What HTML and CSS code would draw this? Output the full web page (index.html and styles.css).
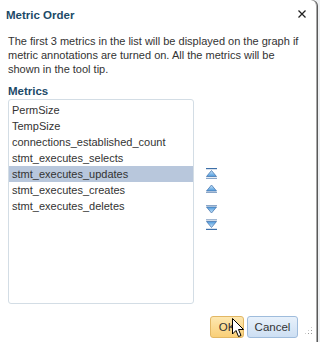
FILE: index.html
```html
<!DOCTYPE html>
<html lang="en">
<head>
    <title>Metric Order</title>
    <link rel="stylesheet" href="styles.css">
</head>
<body>
    <div class="dialog">
        <div class="header">
            <h2>Metric Order</h2>
            <svg class="close" width="8" height="8" viewBox="0 0 8 8">
                <path d="M0.5 0.5 L7.5 7.5 M7.5 0.5 L0.5 7.5" stroke="#222" stroke-width="1.3"/>
            </svg>
        </div>

        <p class="intro">The first 3 metrics in the list will be displayed on the graph if metric annotations are turned on. All the metrics will be shown in the tool tip.</p>

        <div class="section-title">Metrics</div>
        <div class="picker">
            <ul class="list">
                <li>PermSize</li>
                <li>TempSize</li>
                <li>connections_established_count</li>
                <li>stmt_executes_selects</li>
                <li class="selected">stmt_executes_updates</li>
                <li>stmt_executes_creates</li>
                <li>stmt_executes_deletes</li>
            </ul>
            <div class="moves">
                <svg class="move" width="13" height="11" viewBox="0 0 13 11">
                    <defs>
                        <linearGradient id="gUp" x1="0" y1="0" x2="0" y2="1">
                            <stop offset="0" stop-color="#cfe8fb"/>
                            <stop offset="1" stop-color="#4a98dc"/>
                        </linearGradient>
                        <linearGradient id="gDn" x1="0" y1="0" x2="0" y2="1">
                            <stop offset="0" stop-color="#4a98dc"/>
                            <stop offset="1" stop-color="#cfe8fb"/>
                        </linearGradient>
                    </defs>
                    <rect x="1" y="0" width="11" height="1.2" fill="#3d6fa8"/>
                    <path d="M1.5 8.5 L6.5 2.5 L11.5 8.5 Z" fill="url(#gUp)" stroke="#4a79b0" stroke-width="0.8"/>
                    <rect x="1" y="9.8" width="11" height="1.2" fill="#8aa6c8"/>
                </svg>
                <svg class="move" width="13" height="11" viewBox="0 0 13 11">
                    <path d="M1.5 8 L6.5 2 L11.5 8 Z" fill="url(#gUp)" stroke="#4a79b0" stroke-width="0.8"/>
                    <rect x="1" y="8.8" width="11" height="1.2" fill="#8aa6c8"/>
                </svg>
                <svg class="move gap" width="13" height="11" viewBox="0 0 13 11">
                    <rect x="1" y="1" width="11" height="1.2" fill="#8aa6c8"/>
                    <path d="M1.5 3 L6.5 9 L11.5 3 Z" fill="url(#gDn)" stroke="#4a79b0" stroke-width="0.8"/>
                </svg>
                <svg class="move" width="13" height="11" viewBox="0 0 13 11">
                    <rect x="1" y="0.2" width="11" height="1.2" fill="#8aa6c8"/>
                    <path d="M1.5 2.5 L6.5 8.5 L11.5 2.5 Z" fill="url(#gDn)" stroke="#4a79b0" stroke-width="0.8"/>
                    <rect x="1" y="9.8" width="11" height="1.2" fill="#3d6fa8"/>
                </svg>
            </div>
        </div>

        <div class="footer">
            <button class="btn ok">OK</button>
            <button class="btn cancel">Cancel</button>
        </div>

        <span class="grip"></span>

        <svg class="cursor" width="13" height="20" viewBox="0 0 13 20">
            <path d="M0.5 0.5 L0.5 16 L4 12.5 L6.5 18.5 L9 17.5 L6.5 11.5 L11.5 11.5 Z" fill="#fff" stroke="#000" stroke-width="1"/>
        </svg>
    </div>
</body>
</html>
```

FILE: styles.css
```css
body {
    margin: 0;
    background-color: #eef0f2;
    font-family: "Liberation Sans", Arial, sans-serif;
}

.dialog {
    position: relative;
    width: 317px;
    height: 342px;
    box-sizing: border-box;
    background-color: #fff;
    border-right: 1px solid #a8a8a8;
    box-shadow: 1px 0 0 #5a5a5a;
    border-radius: 0 6px 0 0;
    padding: 0 8px;
}

.header {
    display: flex;
    justify-content: space-between;
    align-items: center;
    height: 30px;
}

h2 {
    margin: 0 0 0 -2px;
    font-size: 11.5px;
    font-weight: bold;
    color: #1c4a68;
}

.close {
    display: block;
    margin: -3px 2px 0 0;
}

.intro {
    margin: 4px 0 0;
    font-size: 11px;
    line-height: 14px;
    color: #333;
}

.section-title {
    margin-top: 9px;
    font-size: 11.5px;
    font-weight: bold;
    color: #1c4a68;
}

.picker {
    display: flex;
    align-items: flex-start;
    margin-top: 2px;
}

.list {
    list-style: none;
    margin: 0;
    padding: 2px 0;
    width: 186px;
    height: 205px;
    box-sizing: border-box;
    border: 1px solid #d3dde5;
    border-radius: 3px;
}

.list li {
    height: 16px;
    line-height: 16px;
    padding-left: 3px;
    font-size: 11px;
    color: #333;
    white-space: nowrap;
}

.list li.selected {
    background-color: #b8c7dc;
}

.moves {
    display: flex;
    flex-direction: column;
    gap: 4px;
    margin: 69px 0 0 11px;
}

.move {
    display: block;
}

.move.gap {
    margin-top: 6px;
}

.footer {
    display: flex;
    justify-content: flex-end;
    gap: 3px;
    margin-top: 12px;
    padding-right: 10px;
}

.btn {
    height: 22px;
    box-sizing: border-box;
    font-family: "Liberation Sans", Arial, sans-serif;
    font-size: 11.5px;
    color: #333;
    border-radius: 3px;
    padding: 0;
}

.ok {
    width: 34px;
    background: linear-gradient(#fde7b0, #f9cf78);
    border: 1px solid #e2b764;
}

.cancel {
    width: 51px;
    background: linear-gradient(#e8f1fb, #cddff3);
    border: 1px solid #9fbcdc;
}

.grip {
    position: absolute;
    right: 3px;
    bottom: 7px;
    width: 9px;
    height: 9px;
    background: radial-gradient(circle, #9a9a9a 0.7px, transparent 0.8px) 0 0 / 3px 3px;
    clip-path: polygon(100% 0, 100% 100%, 0 100%);
}

.cursor {
    position: absolute;
    left: 232px;
    top: 318px;
}
```
